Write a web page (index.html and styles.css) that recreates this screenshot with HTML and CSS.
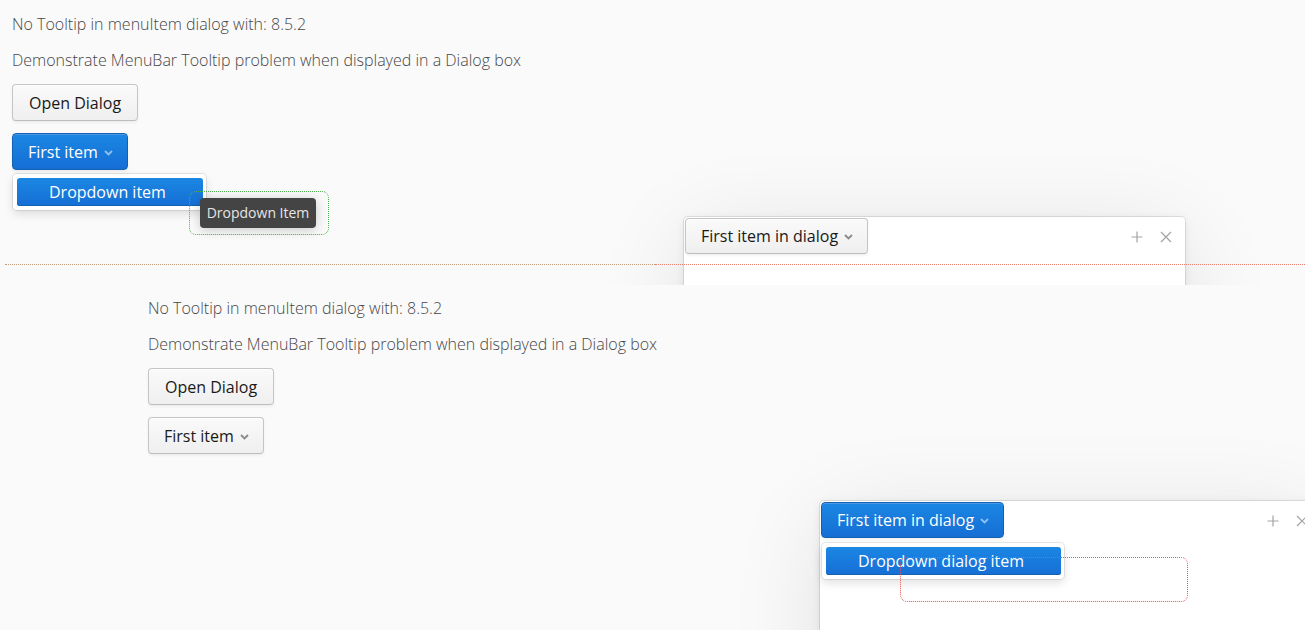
FILE: index.html
```html
<!DOCTYPE html>
<html lang="en">
<head>
  <meta charset="UTF-8" />
  <meta name="viewport" content="width=device-width, initial-scale=1.0"/>
  <title>MenuBar Tooltip in Dialog</title>
  <link rel="stylesheet" href="styles.css">
</head>
<body>
  <!-- first capture: tooltip shown for main menubar -->
  <section class="panel panel-top">
    <div class="layout">
      <div class="label">No Tooltip in menuItem dialog with: 8.5.2</div>
      <div class="label">Demonstrate MenuBar Tooltip problem when displayed in a Dialog box</div>
      <div><button class="btn">Open Dialog</button></div>
      <div>
        <div class="menubar primary">
          <span>First item</span>
          <svg class="chev" width="9" height="6" viewBox="0 0 9 6"><polyline points="1,1 4.5,4.5 8,1" fill="none" stroke="currentColor" stroke-width="1.8"/></svg>
        </div>
      </div>
    </div>

    <div class="popup popup-main">
      <div class="popup-item">Dropdown item</div>
    </div>
    <div class="tip-frame tip-green"></div>
    <div class="tooltip">Dropdown Item</div>

    <div class="window window-top">
      <div class="window-head">
        <div class="menubar">
          <span>First item in dialog</span>
          <svg class="chev" width="9" height="6" viewBox="0 0 9 6"><polyline points="1,1 4.5,4.5 8,1" fill="none" stroke="currentColor" stroke-width="1.8"/></svg>
        </div>
        <div class="window-tools">
          <svg width="14" height="14" viewBox="0 0 14 14"><path d="M7 1.5v11M1.5 7h11" stroke="#a3a3a3" stroke-width="1.2"/></svg>
          <svg width="14" height="14" viewBox="0 0 14 14"><path d="M2 2l10 10M12 2L2 12" stroke="#a3a3a3" stroke-width="1.2"/></svg>
        </div>
      </div>
    </div>

    <div class="separator"></div>
  </section>

  <!-- second capture: dialog menubar opened -->
  <section class="panel panel-bottom">
    <div class="layout">
      <div class="label">No Tooltip in menuItem dialog with: 8.5.2</div>
      <div class="label">Demonstrate MenuBar Tooltip problem when displayed in a Dialog box</div>
      <div><button class="btn">Open Dialog</button></div>
      <div>
        <div class="menubar">
          <span>First item</span>
          <svg class="chev" width="9" height="6" viewBox="0 0 9 6"><polyline points="1,1 4.5,4.5 8,1" fill="none" stroke="currentColor" stroke-width="1.8"/></svg>
        </div>
      </div>
    </div>

    <div class="window window-bottom">
      <div class="window-head">
        <div class="menubar primary">
          <span>First item in dialog</span>
          <svg class="chev" width="9" height="6" viewBox="0 0 9 6"><polyline points="1,1 4.5,4.5 8,1" fill="none" stroke="currentColor" stroke-width="1.8"/></svg>
        </div>
        <div class="window-tools">
          <svg width="14" height="14" viewBox="0 0 14 14"><path d="M7 1.5v11M1.5 7h11" stroke="#a3a3a3" stroke-width="1.2"/></svg>
          <svg width="14" height="14" viewBox="0 0 14 14"><path d="M2 2l10 10M12 2L2 12" stroke="#a3a3a3" stroke-width="1.2"/></svg>
        </div>
      </div>
      <div class="popup popup-dialog">
        <div class="popup-item">Dropdown dialog item</div>
      </div>
      <div class="tip-frame tip-red"></div>
    </div>
  </section>
</body>
</html>
```

FILE: styles.css
```css
* {
  box-sizing: border-box;
  margin: 0;
  padding: 0;
}

body {
  background: #fafafa;
  color: #474747;
  font-family: 'Open Sans', 'DejaVu Sans', sans-serif;
  font-size: 16px;
  font-weight: 300;
  overflow: hidden;
}

.panel {
  position: relative;
  overflow: hidden;
}

.panel-top {
  height: 285px;
  padding: 12px 12px 0;
}

.panel-bottom {
  height: 345px;
  padding: 11px 0 0 148px;
}

.layout {
  display: flex;
  flex-direction: column;
  gap: 12px;
}

.label {
  line-height: 24px;
}

.btn {
  height: 37px;
  padding: 0 16px;
  font-family: inherit;
  font-size: 16px;
  font-weight: 400;
  color: #191919;
  background: linear-gradient(#fafafa, #efefef);
  border: 1px solid #c5c5c5;
  border-bottom-color: #bcbcbc;
  border-radius: 4px;
  box-shadow: inset 0 1px 0 #fff, 0 2px 3px rgba(0, 0, 0, 0.05);
}

.menubar {
  display: inline-flex;
  align-items: center;
  gap: 6px;
  height: 37px;
  padding: 0 14px 0 15px;
  font-weight: 400;
  color: #191919;
  background: linear-gradient(#fafafa, #efefef);
  border: 1px solid #c5c5c5;
  border-bottom-color: #bcbcbc;
  border-radius: 4px;
  box-shadow: inset 0 1px 0 #fff, 0 2px 3px rgba(0, 0, 0, 0.05);
}

.menubar .chev {
  color: #8a8a8a;
  margin-top: 2px;
}

.menubar.primary {
  color: #fff;
  background: linear-gradient(#1b87e3, #166ed5);
  border-color: #1362b1;
  box-shadow: inset 0 1px 0 #4d98e6, 0 2px 3px rgba(0, 0, 0, 0.05);
  text-shadow: 0 -1px 0 rgba(0, 0, 0, 0.05);
}

.menubar.primary .chev {
  color: #8fc0f0;
}

.popup {
  position: absolute;
  background: #fff;
  border-radius: 4px;
  padding: 4px 3px 4px 4px;
  box-shadow: 0 0 0 1px rgba(0, 0, 0, 0.09), 0 4px 10px rgba(0, 0, 0, 0.12);
}

.popup-item {
  height: 28px;
  line-height: 28px;
  padding: 0 37px 0 32px;
  font-weight: 400;
  color: #fff;
  white-space: nowrap;
  background: linear-gradient(#1b87e3, #166ed5);
  border-radius: 3px;
  box-shadow: inset 0 -1px 0 #1362b1;
}

.popup-main {
  left: 13px;
  top: 174px;
  width: 193px;
}

.tip-frame {
  position: absolute;
  border-radius: 7px;
}

.tip-green {
  left: 189px;
  top: 191px;
  width: 140px;
  height: 44px;
  border: 1px dotted #4fb04f;
}

.tip-red {
  left: 80px;
  top: 56px;
  width: 288px;
  height: 45px;
  border: 1px dotted #f05050;
}

.tooltip {
  position: absolute;
  left: 200px;
  top: 198px;
  width: 116px;
  height: 30px;
  line-height: 30px;
  text-align: center;
  font-size: 14px;
  font-weight: 400;
  color: #e6e6e6;
  background: #444;
  border-radius: 4px;
  box-shadow: 0 2px 12px rgba(0, 0, 0, 0.2);
}

.window {
  position: absolute;
  width: 501px;
  height: 300px;
  background: #fff;
  border-radius: 4px;
  box-shadow: 0 0 0 1px rgba(0, 0, 0, 0.09), 0 2px 10px rgba(0, 0, 0, 0.08), 0 16px 90px -4px rgba(0, 0, 0, 0.11);
}

.window-top {
  left: 684px;
  top: 217px;
}

.window-bottom {
  left: 820px;
  top: 216px;
}

.window-head {
  display: flex;
  align-items: flex-start;
  justify-content: space-between;
  padding: 1px 12px 0 1px;
}

.window-head .menubar {
  height: 36px;
}

.window-tools {
  display: flex;
  gap: 15px;
  padding-top: 12px;
}

.popup-dialog {
  left: 2px;
  top: 42px;
}

/* dotted divider between the two captures */
.separator {
  position: absolute;
  left: 5px;
  right: 0;
  top: 264px;
  display: flex;
}

.separator::before,
.separator::after {
  content: '';
  flex: 1;
  border-top: 1px dotted #c49a78;
}

.separator::after {
  border-top-color: #ec8070;
}
```
